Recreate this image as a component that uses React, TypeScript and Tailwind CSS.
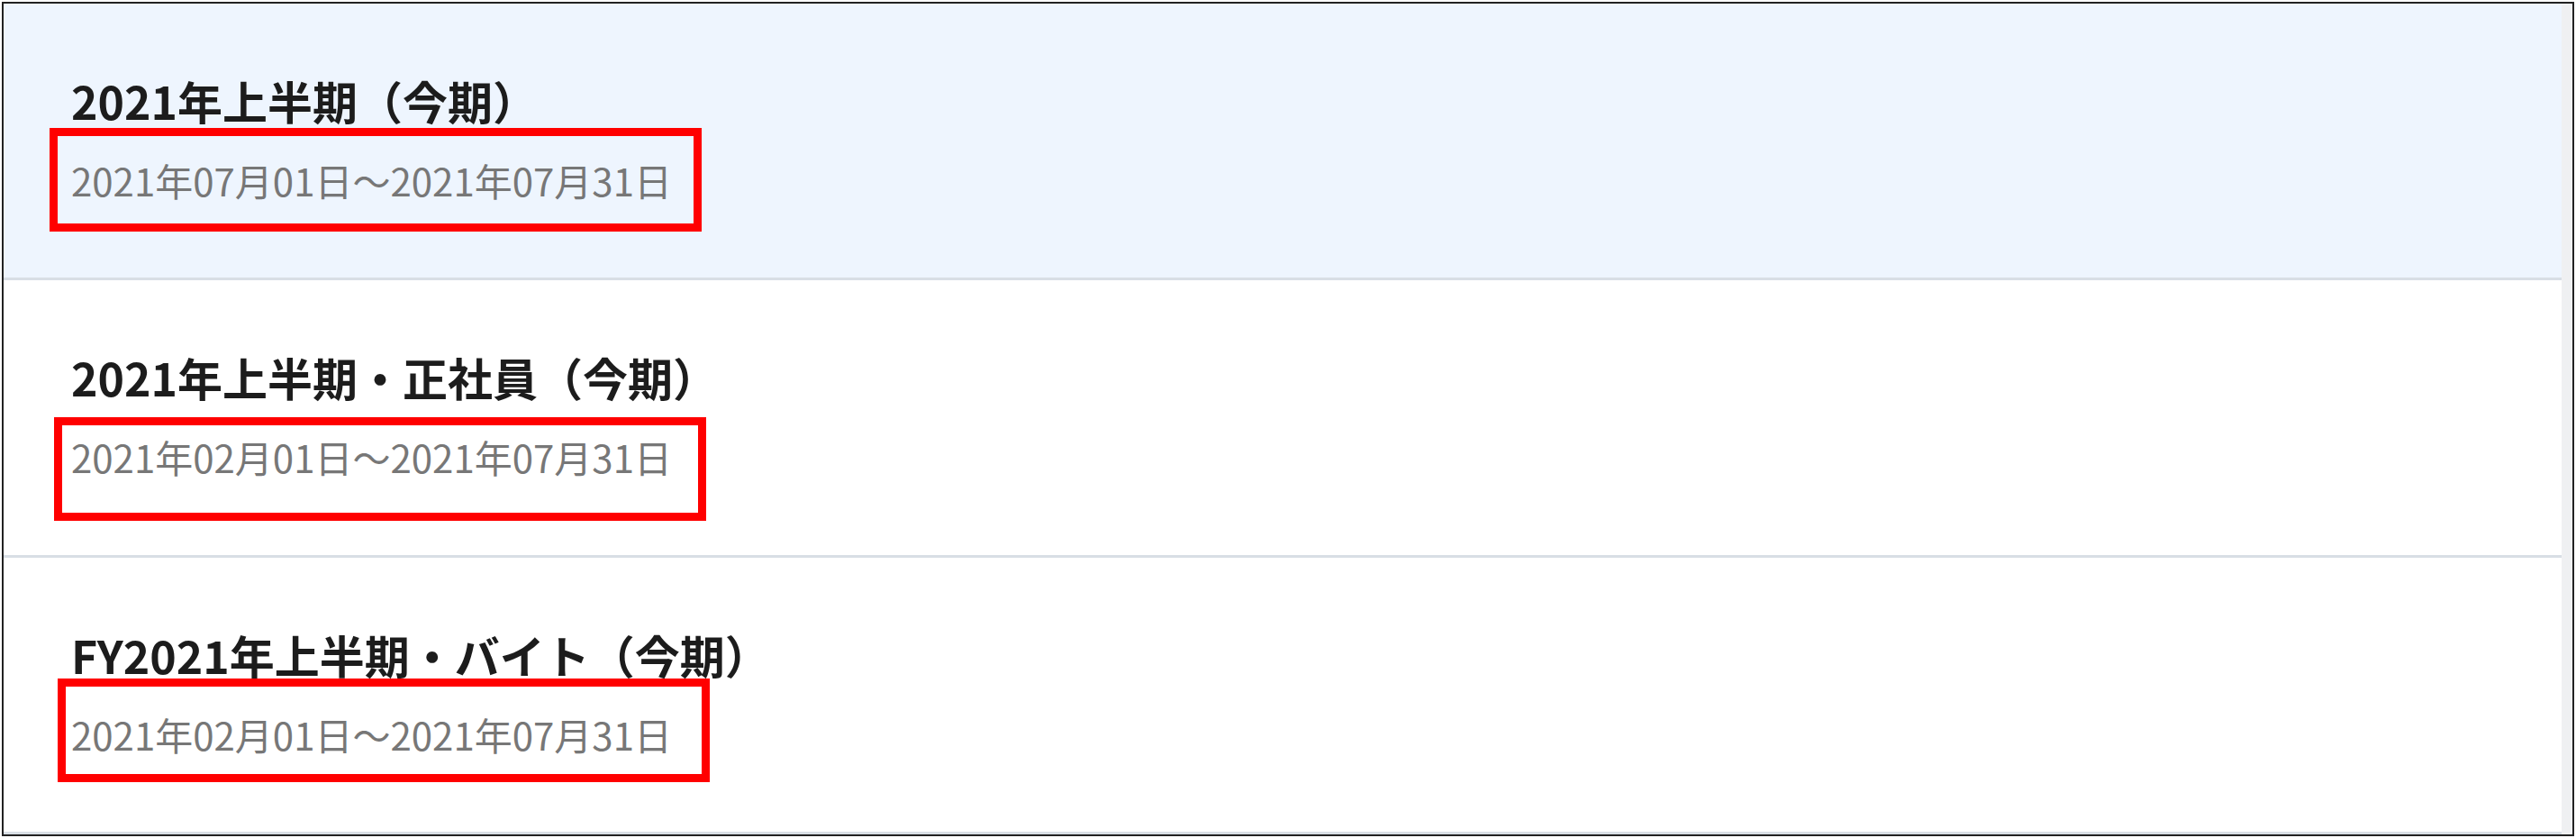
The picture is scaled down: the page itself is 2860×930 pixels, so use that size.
import React from "react";

type Period = {
  title: string;
  range: string;
  active?: boolean;
  mark: string;
};

const periods: Period[] = [
  {
    title: "2021年上半期（今期）",
    range: "2021年07月01日～2021年07月31日",
    active: true,
    mark: "left-[51px] top-[138px]",
  },
  {
    title: "2021年上半期・正社員（今期）",
    range: "2021年02月01日～2021年07月31日",
    mark: "left-[56px] top-[152px]",
  },
  {
    title: "FY2021年上半期・バイト（今期）",
    range: "2021年02月01日～2021年07月31日",
    mark: "left-[60px] top-[134px]",
  },
];

const PeriodRow: React.FC<{ period: Period }> = ({ period }) => (
  <div
    className={`relative flex-1 border-b-[3px] border-[#d8dee5] pl-[75px] pt-[82px] ${
      period.active ? "bg-[#eef5fe]" : "bg-white"
    }`}
  >
    <div className="text-[50px] font-bold leading-none text-[#1c1c1c]">{period.title}</div>
    <div className="mt-[43px] text-[42px] leading-none text-[#777777]">{period.range}</div>
    {/* annotation box */}
    <div
      className={`pointer-events-none absolute h-[115px] w-[724px] border-[9px] border-[#ff0000] ${period.mark}`}
    />
  </div>
);

export default function App() {
  return (
    <div
      className="h-[930px] w-[2860px] bg-white p-[2px]"
      style={{ fontFamily: '"Noto Sans CJK JP", "Noto Sans", sans-serif' }}
    >
      <div className="flex h-full border-2 border-[#222222]">
        <div className="flex flex-1 flex-col">
          {periods.map((p) => (
            <PeriodRow key={p.title} period={p} />
          ))}
        </div>
        <div className="w-[12px] bg-[#eff0f2]" />
      </div>
    </div>
  );
}
